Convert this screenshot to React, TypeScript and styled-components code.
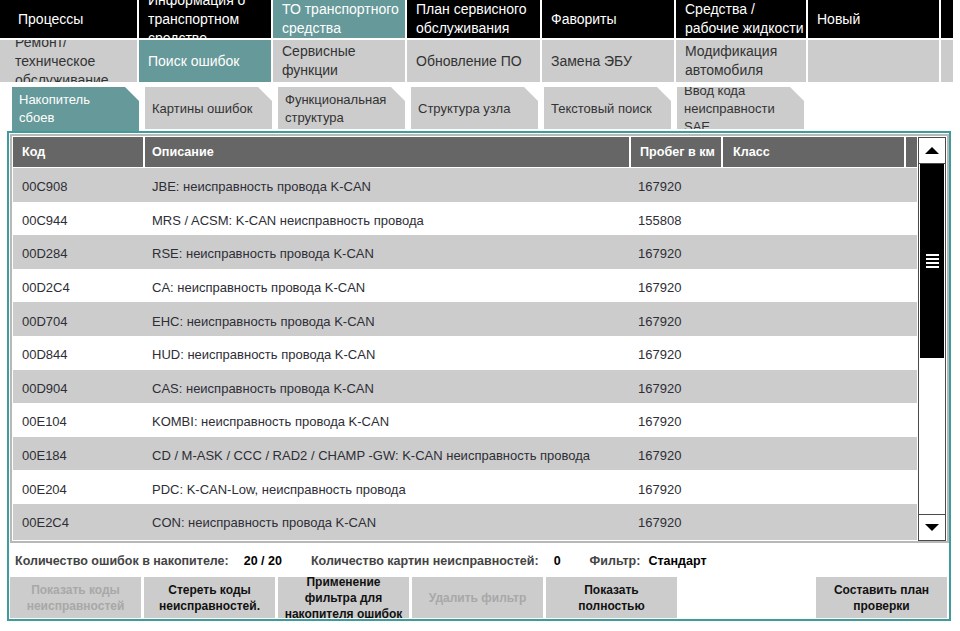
import React from 'react'
import styled, { createGlobalStyle } from 'styled-components'

// данные
type NavItem = { label: string; active?: boolean }

const topMenu: NavItem[] = [
  { label: 'Процессы' },
  { label: 'Информация о транспортном средстве' },
  { label: 'ТО транспортного средства', active: true },
  { label: 'План сервисного обслуживания' },
  { label: 'Фавориты' },
  { label: 'Средства / рабочие жидкости' },
  { label: 'Новый' },
  { label: '' },
]

const subMenu: NavItem[] = [
  { label: 'Ремонт/ техническое обслуживание' },
  { label: 'Поиск ошибок', active: true },
  { label: 'Сервисные функции' },
  { label: 'Обновление ПО' },
  { label: 'Замена ЭБУ' },
  { label: 'Модификация автомобиля' },
  { label: '' },
  { label: '' },
]

const tabs: NavItem[] = [
  { label: 'Накопитель сбоев', active: true },
  { label: 'Картины ошибок' },
  { label: 'Функциональная структура' },
  { label: 'Структура узла' },
  { label: 'Текстовый поиск' },
  { label: 'Ввод кода неисправности SAE' },
]

type Fault = { code: string; text: string; km: string }

const faults: Fault[] = [
  { code: '00C908', text: 'JBE: неисправность провода K-CAN', km: '167920' },
  { code: '00C944', text: 'MRS / ACSM: K-CAN неисправность провода', km: '155808' },
  { code: '00D284', text: 'RSE: неисправность провода K-CAN', km: '167920' },
  { code: '00D2C4', text: 'CA: неисправность провода K-CAN', km: '167920' },
  { code: '00D704', text: 'EHC: неисправность провода K-CAN', km: '167920' },
  { code: '00D844', text: 'HUD: неисправность провода K-CAN', km: '167920' },
  { code: '00D904', text: 'CAS: неисправность провода K-CAN', km: '167920' },
  { code: '00E104', text: 'KOMBI: неисправность провода K-CAN', km: '167920' },
  { code: '00E184', text: 'CD / M-ASK / CCC / RAD2 / CHAMP -GW: K-CAN неисправность провода', km: '167920' },
  { code: '00E204', text: 'PDC: K-CAN-Low, неисправность провода', km: '167920' },
  { code: '00E2C4', text: 'CON: неисправность провода K-CAN', km: '167920' },
]

type Action = { label: string; disabled?: boolean }

const actions: Action[] = [
  { label: 'Показать коды неисправностей', disabled: true },
  { label: 'Стереть коды неисправностей.' },
  { label: 'Применение фильтра для накопителя ошибок' },
  { label: 'Удалить фильтр', disabled: true },
  { label: 'Показать полностью' },
]

const TEAL = '#669999'

const App: React.FC = () => {
  return (
    <Page>
      <GlobalStyle />
      <NavGrid>
        {topMenu.map((item, i) => (
          <NavCell key={'t' + i} $level="top" $active={item.active} $lead={i === 0}>
            <span>{item.label}</span>
          </NavCell>
        ))}
        {subMenu.map((item, i) => (
          <NavCell key={'s' + i} $level="sub" $active={item.active} $lead={i === 0}>
            <span>{item.label}</span>
          </NavCell>
        ))}
      </NavGrid>

      <TabsRow>
        {tabs.map((tab) => (
          <Tab key={tab.label} $active={tab.active}>
            <span>{tab.label}</span>
          </Tab>
        ))}
      </TabsRow>

      <Panel>
        <Frame>
          <TableArea>
            <HeadRow>
              <HeadCell $pad={9}>Код</HeadCell>
              <HeadCell>Описание</HeadCell>
              <HeadCell $pad={9}>Пробег в км</HeadCell>
              <HeadCell $pad={10}>Класс</HeadCell>
              <HeadCell />
            </HeadRow>
            <Body>
              {faults.map((f, i) => (
                <Row key={f.code} $odd={i % 2 === 0}>
                  <Cell $pad={9}>{f.code}</Cell>
                  <Cell>{f.text}</Cell>
                  <Cell>{f.km}</Cell>
                  <Cell />
                  <Cell />
                </Row>
              ))}
            </Body>
          </TableArea>
          <Scrollbar>
            <ScrollButton $dir="up">
              <Arrow $dir="up" />
            </ScrollButton>
            <Thumb>
              <Grip>
                <i />
                <i />
                <i />
                <i />
              </Grip>
            </Thumb>
            <Track />
            <ScrollButton $dir="down">
              <Arrow $dir="down" />
            </ScrollButton>
          </Scrollbar>
        </Frame>

        <Status>
          <StatusLabel>Количество ошибок в накопителе:</StatusLabel>
          <StatusValue>20 / 20</StatusValue>
          <StatusLabel>Количество картин неисправностей:</StatusLabel>
          <StatusValue>0</StatusValue>
          <StatusLabel>Фильтр:</StatusLabel>
          <StatusValue $tight>Стандарт</StatusValue>
        </Status>

        <Actions>
          {actions.map((a) => (
            <ActionButton key={a.label} $disabled={a.disabled}>
              <span>{a.label}</span>
            </ActionButton>
          ))}
          <ActionButton $push>
            <span>Составить план проверки</span>
          </ActionButton>
        </Actions>
      </Panel>
    </Page>
  )
}

const GlobalStyle = createGlobalStyle`
  html, body {
    margin: 0;
    padding: 0;
    background: #ffffff;
  }
  body {
    font-family: "Liberation Sans", Arial, sans-serif;
    overflow: hidden;
  }
`

const Page = styled.div`
  width: 960px;
  height: 631px;
  overflow: hidden;
  background: #ffffff;
`

//メニュー
const NavGrid = styled.div`
  display: grid;
  grid-template-columns: 137px 132px 132px 133px 132px 130px 131px 12px;
  grid-template-rows: 38px 42px;
  gap: 2px;
  width: 953px;
`

const NavCell = styled.div<{ $level: 'top' | 'sub'; $active?: boolean; $lead?: boolean }>`
  display: flex;
  align-items: center;
  overflow: hidden;
  box-sizing: border-box;
  padding: 0 1px 0 ${(p) => (p.$lead ? (p.$level === 'top' ? 18 : 15) : 9)}px;
  background: ${(p) => (p.$active ? TEAL : p.$level === 'top' ? '#000000' : '#cccccc')};
  color: ${(p) => (p.$level === 'top' || p.$active ? '#ffffff' : '#333333')};
  font-size: 14px;
  line-height: 19px;
`

//タブ
const TabsRow = styled.div`
  display: flex;
  align-items: flex-start;
  gap: 6px;
  height: 44px;
  margin-top: 5px;
  padding-left: 12px;
`

const Tab = styled.div<{ $active?: boolean }>`
  width: 127px;
  height: ${(p) => (p.$active ? 44 : 42)}px;
  box-sizing: border-box;
  padding: ${(p) => (p.$active ? '0' : '2px')} 14px 0 7px;
  display: flex;
  align-items: center;
  overflow: hidden;
  background: ${(p) => (p.$active ? TEAL : '#cccccc')};
  color: ${(p) => (p.$active ? '#ffffff' : '#333333')};
  font-size: 13px;
  line-height: 18px;
  clip-path: polygon(0 0, calc(100% - 14px) 0, 100% 14px, 100% 100%, 0 100%);
`

//パネル
const Panel = styled.div`
  width: 944px;
  margin-left: 7px;
  box-sizing: border-box;
  border: 2px solid #3f9c9c;
  padding: 1px 0 0 1px;
`

const Frame = styled.div`
  display: flex;
  gap: 1px;
  height: 404px;
  border: 2px solid #b8b8b8;
  padding: 1px 1px 0 1px;
`

const TableArea = styled.div`
  flex: 1;
  overflow: hidden;
`

const HeadRow = styled.div`
  display: grid;
  grid-template-columns: 130px 484px 90px 181px 11px;
  column-gap: 2px;
  height: 30px;
  background: #ffffff;
`

const HeadCell = styled.div<{ $pad?: number }>`
  background: #666666;
  color: #ffffff;
  font-size: 12.6px;
  font-weight: bold;
  white-space: nowrap;
  display: flex;
  align-items: center;
  padding-left: ${(p) => p.$pad ?? 7}px;
`

const Body = styled.div`
  margin-top: 1px;
  padding-top: 2px;
`

const Row = styled.div<{ $odd?: boolean }>`
  display: grid;
  grid-template-columns: 130px 484px 90px 181px 11px;
  column-gap: 2px;
  height: 33.6px;
  margin-top: -2px;
  padding-top: 2px;
  background: ${(p) => (p.$odd ? '#cccccc' : '#ffffff')};
`

const Cell = styled.div<{ $pad?: number }>`
  display: flex;
  align-items: center;
  padding-left: ${(p) => p.$pad ?? 7}px;
  color: #2e2e36;
  font-size: 13px;
  white-space: nowrap;
`

//スクロール
const Scrollbar = styled.div`
  width: 28px;
  box-sizing: border-box;
  border: 1px solid #4a4a4a;
  display: flex;
  flex-direction: column;
  background: #ffffff;
`

const ScrollButton = styled.div<{ $dir: 'up' | 'down' }>`
  height: 25px;
  display: flex;
  align-items: center;
  justify-content: center;
  border-${(p) => (p.$dir === 'up' ? 'bottom' : 'top')}: 1px solid #4a4a4a;
`

const Arrow = styled.div<{ $dir: 'up' | 'down' }>`
  width: 0;
  height: 0;
  border-left: 7px solid transparent;
  border-right: 7px solid transparent;
  ${(p) => (p.$dir === 'up' ? 'border-bottom: 7px solid #000;' : 'border-top: 7px solid #000;')}
`

const Thumb = styled.div`
  height: 194px;
  margin: 0 1px;
  background: #000000;
  display: flex;
  align-items: center;
  justify-content: center;
`

const Grip = styled.div`
  display: flex;
  flex-direction: column;
  gap: 2px;
  i {
    display: block;
    width: 13px;
    height: 2px;
    background: #ffffff;
  }
`

const Track = styled.div`
  flex: 1;
`

//ステータス
const Status = styled.div`
  display: flex;
  align-items: center;
  height: 34px;
  padding: 2px 0 0 5px;
  box-sizing: border-box;
  font-size: 12.5px;
  font-weight: bold;
`

const StatusLabel = styled.span`
  color: #444444;
`

const StatusValue = styled.span<{ $tight?: boolean }>`
  color: #000000;
  margin-left: ${(p) => (p.$tight ? 8 : 15)}px;
  margin-right: 29px;
`

//ボタン
const Actions = styled.div`
  display: flex;
  gap: 3px;
  padding: 0 2px 1px 0;
`

const ActionButton = styled.div<{ $disabled?: boolean; $push?: boolean }>`
  width: 131px;
  height: 41px;
  flex: none;
  box-sizing: border-box;
  padding: 0 6px;
  display: flex;
  align-items: center;
  justify-content: center;
  overflow: hidden;
  text-align: center;
  background: #cccccc;
  color: ${(p) => (p.$disabled ? '#a8a8a8' : '#111111')};
  font-size: 12px;
  font-weight: bold;
  line-height: 16px;
  margin-left: ${(p) => (p.$push ? 'auto' : '0')};
`

export default App
